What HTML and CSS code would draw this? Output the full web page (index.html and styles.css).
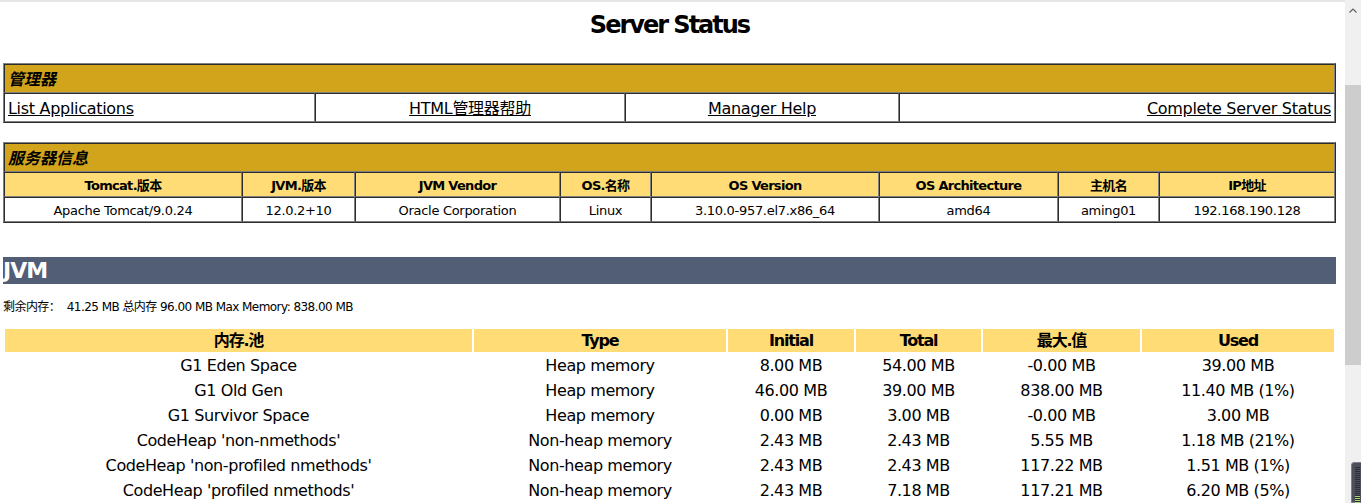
FILE: index.html
```html
<!DOCTYPE html>
<html lang="zh-CN">
<head>
<meta charset="utf-8">
<title>Server Status</title>
<link rel="stylesheet" href="styles.css">
</head>
<body>
<div class="page">
  <h1 class="page-title">Server Status</h1>

  <table class="box mgr">
    <colgroup>
      <col class="m1"><col class="m2"><col class="m3"><col class="m4">
    </colgroup>
    <tr><td colspan="4" class="title">管理器</td></tr>
    <tr class="links">
      <td class="row-left"><a href="#">List Applications</a></td>
      <td class="row-center"><a href="#">HTML管理器帮助</a></td>
      <td class="row-center"><a href="#">Manager Help</a></td>
      <td class="row-right"><a href="#">Complete Server Status</a></td>
    </tr>
  </table>

  <table class="box info">
    <colgroup>
      <col class="i1"><col class="i2"><col class="i3"><col class="i4">
      <col class="i5"><col class="i6"><col class="i7"><col class="i8">
    </colgroup>
    <tr><td colspan="8" class="title">服务器信息</td></tr>
    <tr class="hdr">
      <td>Tomcat.版本</td>
      <td>JVM.版本</td>
      <td>JVM Vendor</td>
      <td>OS.名称</td>
      <td>OS Version</td>
      <td>OS Architecture</td>
      <td>主机名</td>
      <td>IP地址</td>
    </tr>
    <tr class="data">
      <td>Apache Tomcat/9.0.24</td>
      <td>12.0.2+10</td>
      <td>Oracle Corporation</td>
      <td>Linux</td>
      <td>3.10.0-957.el7.x86_64</td>
      <td>amd64</td>
      <td>aming01</td>
      <td>192.168.190.128</td>
    </tr>
  </table>

  <h1 class="section">JVM</h1>
  <p class="mem-summary">剩余内存：&nbsp; 41.25 MB 总内存 96.00 MB Max Memory: 838.00 MB</p>

  <table class="pools">
    <colgroup>
      <col class="p1"><col class="p2"><col class="p3"><col class="p4"><col class="p5"><col class="p6">
    </colgroup>
    <tr>
      <th>内存.池</th><th>Type</th><th>Initial</th><th>Total</th><th>最大.值</th><th>Used</th>
    </tr>
    <tr>
      <td>G1 Eden Space</td><td>Heap memory</td><td>8.00 MB</td><td>54.00 MB</td><td>-0.00 MB</td><td>39.00 MB</td>
    </tr>
    <tr>
      <td>G1 Old Gen</td><td>Heap memory</td><td>46.00 MB</td><td>39.00 MB</td><td>838.00 MB</td><td>11.40 MB (1%)</td>
    </tr>
    <tr>
      <td>G1 Survivor Space</td><td>Heap memory</td><td>0.00 MB</td><td>3.00 MB</td><td>-0.00 MB</td><td>3.00 MB</td>
    </tr>
    <tr>
      <td>CodeHeap 'non-nmethods'</td><td>Non-heap memory</td><td>2.43 MB</td><td>2.43 MB</td><td>5.55 MB</td><td>1.18 MB (21%)</td>
    </tr>
    <tr>
      <td>CodeHeap 'non-profiled nmethods'</td><td>Non-heap memory</td><td>2.43 MB</td><td>2.43 MB</td><td>117.22 MB</td><td>1.51 MB (1%)</td>
    </tr>
    <tr>
      <td>CodeHeap 'profiled nmethods'</td><td>Non-heap memory</td><td>2.43 MB</td><td>7.18 MB</td><td>117.21 MB</td><td>6.20 MB (5%)</td>
    </tr>
  </table>
</div>

<div class="scrollbar">
  <svg class="sb-arrow" width="8" height="5" viewBox="0 0 8 5"><path d="M0.5 4.5 L4 1 L7.5 4.5" fill="none" stroke="#606060" stroke-width="1.2"/></svg>
  <div class="sb-thumb"></div>
</div>
<div class="meter"><div class="meter-lines"></div></div>
</body>
</html>
```

FILE: styles.css
```css
html {
  overflow: hidden;
  background: #ffffff;
}

body {
  margin: 0;
  font-family: "DejaVu Sans", "Noto Sans CJK SC", sans-serif;
  color: #000000;
}

.page {
  width: 1345px;
  box-sizing: border-box;
  padding: 0 9px 0 3px;
  border-top: 2px solid #e6e6e6;
}

.page-title {
  margin: 8px 0 0;
  font-size: 24px;
  line-height: 30px;
  font-weight: bold;
  text-align: center;
  letter-spacing: -2px;
}

a {
  color: #000000;
  text-decoration: underline;
}

/* bordered tables */
table.box {
  width: 100%;
  table-layout: fixed;
  border-collapse: separate;
  border-spacing: 0;
  border: 1px outset #808080;
}

table.box td {
  border: 1px inset #808080;
  padding: 4px 3px 2px;
  font-size: 16px;
  line-height: 21px;
  letter-spacing: -0.3px;
  white-space: nowrap;
  overflow: hidden;
}

table.box td.title {
  background: #d2a41c;
  font-style: italic;
  font-weight: bold;
  text-align: left;
  letter-spacing: 0;
}

.mgr {
  margin-top: 23px;
}

.row-left { text-align: left; }
.row-center { text-align: center; }
.row-right { text-align: right; }

.m1 { width: 311px; }
.m2 { width: 310px; }
.m3 { width: 274px; }
.m4 { width: 436px; }

.info {
  margin-top: 19px;
}

.i1 { width: 238px; }
.i2 { width: 113px; }
.i3 { width: 205px; }
.i4 { width: 91px; }
.i5 { width: 228px; }
.i6 { width: 179px; }
.i7 { width: 101px; }
.i8 { width: 176px; }

table.info tr.hdr td,
table.info tr.data td {
  padding: 3px 3px 1px;
  font-size: 13px;
  line-height: 19px;
  text-align: center;
}

table.info tr.hdr td {
  background: #ffdc75;
  font-weight: bold;
  letter-spacing: -0.7px;
}

table.info tr.data td {
  background: #ffffff;
  letter-spacing: -0.3px;
}

/* JVM section */
.section {
  margin: 34px 0 0;
  padding-top: 1px;
  background: #525d76;
  color: #ffffff;
  font-size: 22px;
  line-height: 26px;
  font-weight: bold;
  letter-spacing: -1px;
}

.mem-summary {
  margin: 16px 0 0;
  font-size: 12px;
  line-height: 15px;
  letter-spacing: -0.55px;
}

/* memory pools */
.pools {
  margin-top: 12px;
  width: 100%;
  table-layout: fixed;
  border-collapse: separate;
  border-spacing: 2px;
}

.p1 { width: 467px; }
.p2 { width: 252px; }
.p3 { width: 126px; }
.p4 { width: 125px; }
.p5 { width: 157px; }
.p6 { width: 192px; }

.pools th,
.pools td {
  padding: 0;
  font-size: 16px;
  line-height: 23px;
  text-align: center;
  white-space: nowrap;
}

.pools th {
  background: #ffdc75;
  font-weight: bold;
  letter-spacing: -1.2px;
}

.pools td {
  letter-spacing: -0.4px;
}

/* window scrollbar (overlay) */
.scrollbar {
  position: fixed;
  top: 0;
  right: 0;
  width: 16px;
  height: 100%;
  background: #f0f0f0;
}

.sb-arrow {
  position: absolute;
  left: 4px;
  top: 8px;
}

.sb-thumb {
  position: absolute;
  left: 0;
  right: 0;
  top: 85px;
  height: 280px;
  background: #cdcdcd;
}

/* small desktop meter widget overlapping the corner */
.meter {
  position: fixed;
  left: 1351px;
  top: 462px;
  width: 12px;
  height: 41px;
  box-sizing: border-box;
  background: #4b505c;
  border: 1px solid #7b808b;
  border-radius: 3px 0 0 0;
}

.meter-lines {
  position: absolute;
  left: 3px;
  top: 4px;
  width: 5px;
  height: 36px;
  background: repeating-linear-gradient(to bottom, #2b2e36 0, #2b2e36 1px, transparent 1px, transparent 2px);
}

.meter-lines::after {
  content: "";
  position: absolute;
  left: 0;
  right: 0;
  bottom: 0;
  height: 7px;
  background: repeating-linear-gradient(to bottom, #a6d96a 0, #a6d96a 1px, transparent 1px, transparent 2px);
}
```
